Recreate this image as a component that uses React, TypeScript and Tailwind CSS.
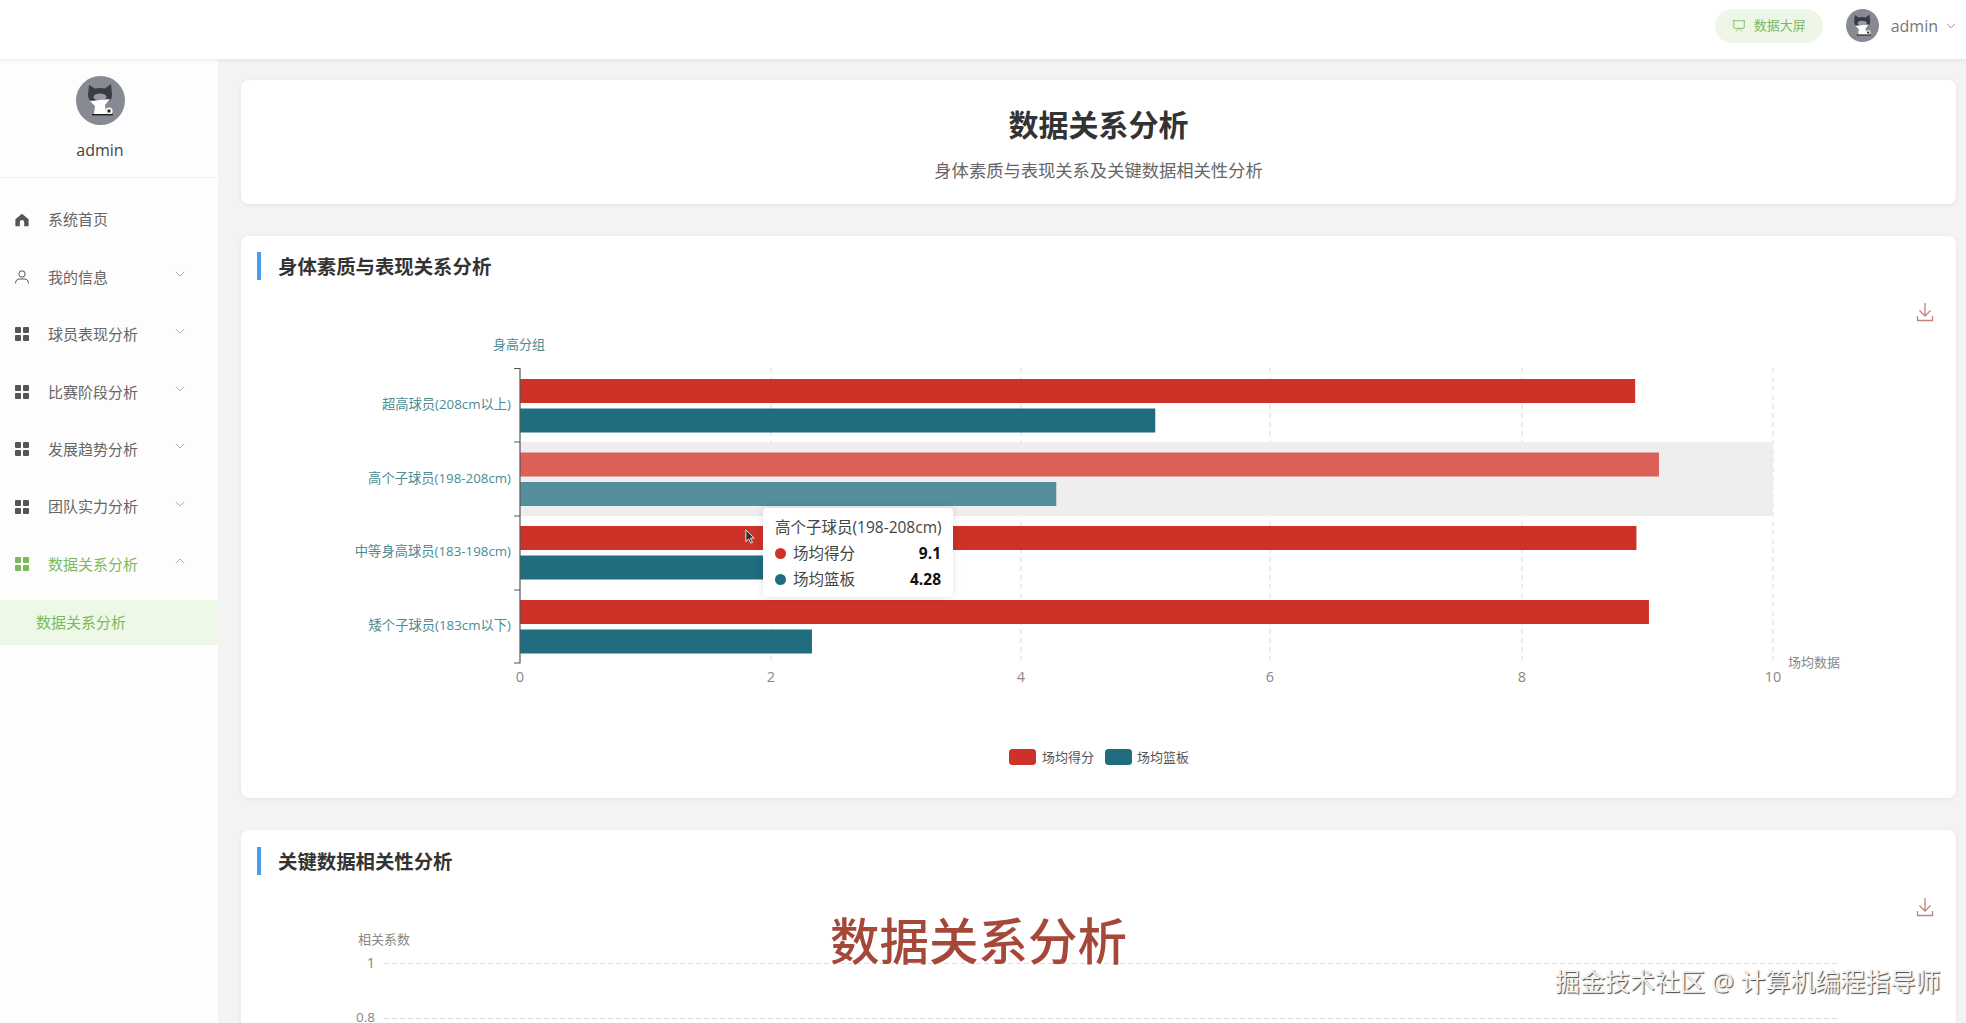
import { ChevronDown, ChevronUp, Presentation } from "lucide-react";

const X0 = 520;
const UNIT = 125.3;

const groups = [
  { name: "超高球员(208cm以上)", score: 8.9, rebound: 5.07, y: 379 },
  { name: "高个子球员(198-208cm)", score: 9.09, rebound: 4.28, y: 452.5, hover: true },
  { name: "中等身高球员(183-198cm)", score: 8.91, rebound: 3.2, y: 526 },
  { name: "矮个子球员(183cm以下)", score: 9.01, rebound: 2.33, y: 600 },
];

const menu = [
  { name: "系统首页", icon: "home" },
  { name: "我的信息", icon: "user", arrow: true },
  { name: "球员表现分析", icon: "grid", arrow: true },
  { name: "比赛阶段分析", icon: "grid", arrow: true },
  { name: "发展趋势分析", icon: "grid", arrow: true },
  { name: "团队实力分析", icon: "grid", arrow: true },
];

const Avatar = ({ className }: { className: string }) => (
  <svg viewBox="0 0 49 49" className={className}>
    <circle cx="24.5" cy="24.5" r="24.5" fill="#878a93" />
    <path d="M12 19 L13 9 L19 12.5 Q24 11.5 29 12.5 L35 8 L36 19 Q36 25 30 26 L18 26 Q12 25 12 19Z" fill="#3a3b45" />
    <ellipse cx="24" cy="21" rx="6.5" ry="3.5" fill="#9a9aa5" />
    <path d="M14 25 L34 23 L29 29 L30 38 H18 L19 30 Z" fill="#fff" />
    <circle cx="33" cy="35" r="3.6" fill="#fff" />
    <path d="M31.5 33.5 h3 v3 h-3z" fill="#222" />
    <rect x="16" y="38" width="21" height="1.4" fill="#1c1c1c" />
  </svg>
);

const MenuIcon = ({ type }: { type: string }) => {
  if (type === "home") {
    return (
      <svg viewBox="0 0 14 14" className="w-[14px] h-[14px] fill-[#555]">
        <path d="M7 .8 13.6 6.2V13.2H9.2V9.2A2.2 2.2 0 0 0 4.8 9.2V13.2H.4V6.2Z" />
      </svg>
    );
  }
  if (type === "user") {
    return (
      <svg viewBox="0 0 14 14" className="w-[14px] h-[14px] fill-none stroke-[#555]">
        <circle cx="7" cy="4" r="3.2" />
        <path d="M.7 13.5V12.5C.7 10.3 2.5 9 4.5 9H9.5C11.5 9 13.3 10.3 13.3 12.5V13.5" />
      </svg>
    );
  }
  return (
    <div className="grid grid-cols-2 gap-[2px] w-[14px] h-[14px]">
      <span className="bg-current rounded-[1px]" />
      <span className="bg-current rounded-[1px]" />
      <span className="bg-current rounded-[1px]" />
      <span className="bg-current rounded-[1px]" />
    </div>
  );
};

const DownloadIcon = ({ x, y }: { x: number; y: number }) => (
  <g transform={`translate(${x} ${y})`} fill="none" stroke="#c4817d" strokeWidth="1.3">
    <path d="M8 0V13M2.5 7.5 8 13 13.5 7.5" />
    <path d="M.5 13V17.5H15.5V13" />
  </g>
);

const CardTitle = ({ text }: { text: string }) => (
  <div className="flex items-center h-[28px] ml-4">
    <span className="w-1 h-full bg-[#4a9fe8]" />
    <h2 className="ml-[17px] pt-[2px] text-[19.4px] font-bold text-[#333]">{text}</h2>
  </div>
);

const RelationChart = () => (
  <svg viewBox="241 280 1715 518" className="block w-[1715px] h-[518px]">
    <DownloadIcon x={1917} y={303} />
    {[771, 1021, 1270, 1522, 1773].map((x) => (
      <line key={x} x1={x} x2={x} y1="368" y2="663" stroke="#dcdcdc" strokeDasharray="5 4" />
    ))}
    <rect x={X0} y="442" width="1253" height="74" fill="#eeeeee" />
    {groups.map((g) => (
      <g key={g.name}>
        <rect x={X0} y={g.y} width={g.score * UNIT} height="24" fill={g.hover ? "#dc5f58" : "#cd3228"} />
        <rect x={X0} y={g.y + 29.5} width={g.rebound * UNIT} height="24" fill={g.hover ? "#558e9c" : "#206d80"} />
        <text x="511" y={g.y + 30} textAnchor="end" fontSize="13.3" fill="#4b8c94">
          {g.name}
        </text>
      </g>
    ))}
    <path d="M514 368.5H520V663H514M514 442H520M514 516H520M514 590H520" fill="none" stroke="#555" strokeWidth="1.2" />
    <text x="519" y="348.5" textAnchor="middle" fontSize="13" fill="#4b8c94">
      身高分组
    </text>
    {[0, 2, 4, 6, 8, 10].map((v, i) => (
      <text key={v} x={[520, 771, 1021, 1270, 1522, 1773][i]} y="682" textAnchor="middle" fontSize="14.5" fill="#888">
        {v}
      </text>
    ))}
    <text x="1788" y="667" fontSize="13" fill="#888">
      场均数据
    </text>
    <rect x="1009" y="749" width="27" height="16" rx="3.5" fill="#cd3228" />
    <text x="1042" y="761.5" fontSize="13" fill="#555">
      场均得分
    </text>
    <rect x="1105" y="749" width="27" height="16" rx="3.5" fill="#206d80" />
    <text x="1137" y="761.5" fontSize="13" fill="#555">
      场均篮板
    </text>
  </svg>
);

const CorrelationChart = () => (
  <svg viewBox="241 875 1715 148" className="block w-[1715px] h-[148px]">
    <DownloadIcon x={1917} y={898} />
    <text x="358" y="943.5" fontSize="13" fill="#888">
      相关系数
    </text>
    <text x="375" y="968" textAnchor="end" fontSize="14.5" fill="#888">
      1
    </text>
    <text x="375" y="1022" textAnchor="end" fontSize="13.5" fill="#888">
      0.8
    </text>
    <line x1="384" x2="1840" y1="963.5" y2="963.5" stroke="#dcdcdc" strokeDasharray="5 3" />
    <line x1="384" x2="1840" y1="1018.5" y2="1018.5" stroke="#dcdcdc" strokeDasharray="5 3" />
  </svg>
);

const Sidebar = () => (
  <aside className="relative w-[218px] shrink-0 bg-[#fdfdfd]">
    <div className="h-[119px] pt-[17px] pr-[18px] flex flex-col items-center border-b border-[#eeeeee]">
      <Avatar className="w-[49px] h-[49px]" />
      <div className="mt-[14px] text-[16px] leading-[22px] text-[#444]">admin</div>
    </div>
    <nav className="pt-[13px]">
      {menu.map((item) => (
        <div key={item.name} className="h-[57.4px] flex items-center pl-[15px] text-[#666]">
          <span className="w-[33px] text-[#555]">
            <MenuIcon type={item.icon} />
          </span>
          <span className="text-[15px]">{item.name}</span>
          {item.arrow && (
            <ChevronDown strokeWidth={1} className="absolute left-[172px] w-[16px] h-[16px] -mt-[6px] text-[#888]" />
          )}
        </div>
      ))}
      <div className="h-[57.4px] flex items-center pl-[15px] text-[#7cba5c]">
        <span className="w-[33px]">
          <MenuIcon type="grid" />
        </span>
        <span className="text-[15px]">数据关系分析</span>
        <ChevronUp strokeWidth={1} className="absolute left-[172px] w-[16px] h-[16px] -mt-[6px] text-[#888]" />
      </div>
      <div className="h-[45px] mt-[7.5px] flex items-center pl-[36px] bg-[#eef8e7] text-[15px] text-[#7cba5c]">
        数据关系分析
      </div>
    </nav>
  </aside>
);

export default function App() {
  return (
    <div className="relative h-screen w-full overflow-hidden flex flex-col bg-[#f3f3f3] font-['Open_Sans','Noto_Sans_CJK_SC',sans-serif]">
      <header className="relative z-10 h-[59px] shrink-0 bg-white shadow-[0_1px_4px_rgba(0,0,0,0.08)] flex items-start justify-end pt-[9px] pr-[8px]">
        <button className="w-[108px] h-[34px] rounded-full bg-[#eef7e7] flex items-center justify-center gap-[8px] text-[13px] text-[#7ab85e]">
          <Presentation strokeWidth={1.5} className="w-[14px] h-[14px]" />
          数据大屏
        </button>
        <Avatar className="ml-[23px] w-[33px] h-[33px]" />
        <span className="ml-3 text-[16px] leading-[34px] text-[#777]">admin</span>
        <ChevronDown strokeWidth={1.2} className="ml-[6px] mt-[10px] w-[14px] h-[14px] text-[#666]" />
      </header>

      <div className="flex flex-1 min-h-0">
        <Sidebar />
        <main className="flex-1 min-w-0 pl-[23px] pr-[10px] pt-[21px] flex flex-col gap-[32px]">
          <section className="h-[124px] shrink-0 bg-white rounded-lg shadow-[0_1px_4px_rgba(0,0,0,0.07)] flex flex-col items-center pt-[24px]">
            <h1 className="text-[30px] leading-[42px] font-bold text-[#333]">数据关系分析</h1>
            <p className="mt-[12px] text-[17.3px] leading-[26px] text-[#666]">身体素质与表现关系及关键数据相关性分析</p>
          </section>

          <section className="relative h-[562px] shrink-0 bg-white rounded-lg shadow-[0_1px_4px_rgba(0,0,0,0.07)] pt-[16px]">
            <CardTitle text="身体素质与表现关系分析" />
            <RelationChart />
            <svg viewBox="0 0 12 18" className="absolute left-[504px] top-[293px] w-[10px] h-[15px]">
              <path d="M1 1V15L4.5 12L7 17L9 16L6.8 11H11Z" fill="#333" stroke="#fff" strokeWidth="1" />
            </svg>
            <div className="absolute left-[522px] top-[272px] w-[190px] h-[89px] bg-white shadow-[0_0_8px_rgba(0,0,0,0.12)] rounded-[4px] px-3 pt-[6px] text-[15.5px] leading-[26px] text-[#444]">
              <div className="whitespace-nowrap">高个子球员(198-208cm)</div>
              {[
                { label: "场均得分", value: 9.1, dot: "bg-[#cd3228]" },
                { label: "场均篮板", value: 4.28, dot: "bg-[#206d80]" },
              ].map((row) => (
                <div key={row.label} className="flex items-center">
                  <span className={`w-[11px] h-[11px] rounded-full mr-[7px] ${row.dot}`} />
                  {row.label}
                  <b className="ml-auto text-[#111]">{row.value}</b>
                </div>
              ))}
            </div>
          </section>

          <section className="flex-1 min-h-0 overflow-hidden bg-white rounded-t-lg shadow-[0_1px_4px_rgba(0,0,0,0.07)] pt-[17px]">
            <CardTitle text="关键数据相关性分析" />
            <CorrelationChart />
          </section>
        </main>
      </div>

      <div className="absolute left-[830px] top-[906px] text-[49.5px] leading-[70px] font-medium text-[#a5483a]">数据关系分析</div>
      <div className="absolute left-[1555px] top-[963px] text-[25px] leading-[36px] text-[#f2f2f2] [text-shadow:1px_1px_1px_#444]">
        掘金技术社区 @ 计算机编程指导师
      </div>
    </div>
  );
}
